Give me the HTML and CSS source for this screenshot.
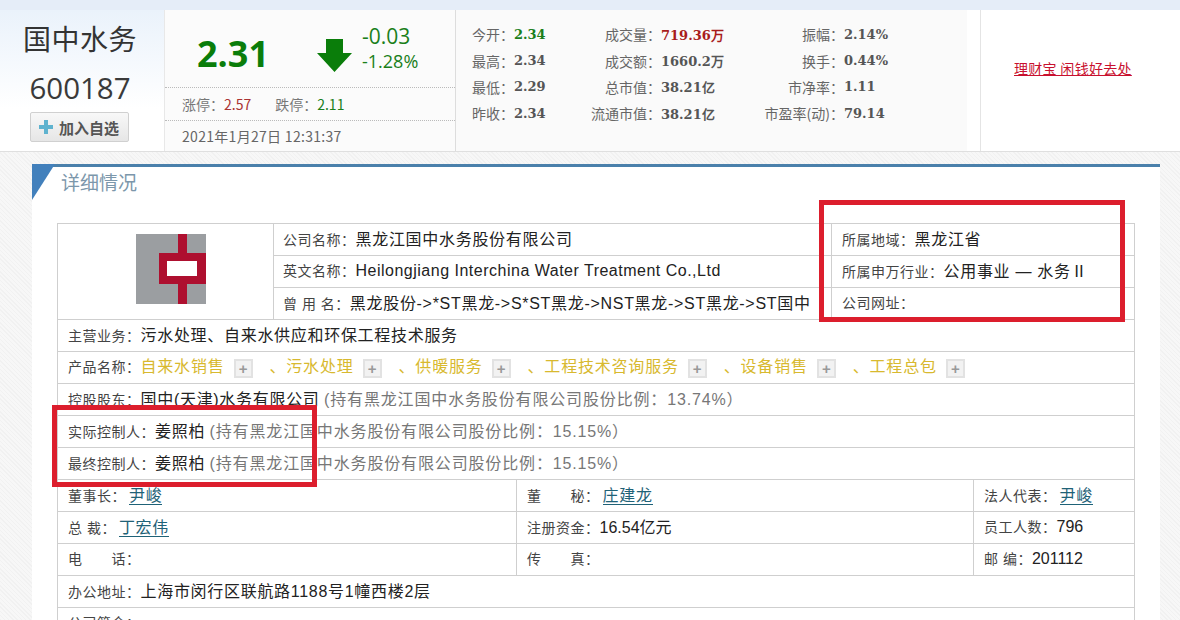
FILE: index.html
```html
<!DOCTYPE html>
<html lang="zh-CN">
<head>
  <meta charset="UTF-8" />
  <title>国中水务 600187</title>
  <link rel="stylesheet" href="styles.css">
</head>
<body>

  <div class="quote">
    <div class="stock">
      <div class="stock-name">国中水务</div>
      <div class="stock-code">600187</div>
      <div class="add-btn">
        <svg class="add-icon" width="16" height="16" viewBox="0 0 16 16"><path d="M6 1h4v5h5v4h-5v5H6v-5H1V6h5z" fill="#5fb3cf"/></svg>
        加入自选
      </div>
    </div>

    <div class="price">
      <div class="price-main">
        <span class="price-now">2.31</span>
        <svg class="price-arrow" width="35" height="33" viewBox="0 0 35 33"><path d="M9 0h17v14h9L17.500 33 0 14h9z" fill="#0a7d0a"/></svg>
        <div class="price-change">
          <div class="change-abs">-0.03</div>
          <div class="change-pct">-1.28%</div>
        </div>
      </div>
      <div class="price-limit">
        <span>涨停：<i class="up">2.57</i></span>
        <span>跌停：<i class="down">2.11</i></span>
      </div>
      <div class="price-time">2021年1月27日 12:31:37</div>
    </div>

    <div class="stats">
      <span class="st-label">今开：</span><b class="st-val down">2.34</b>
      <span class="st-label">成交量：</span><b class="st-val red">719.36万</b>
      <span class="st-label">振幅：</span><b class="st-val">2.14%</b>

      <span class="st-label">最高：</span><b class="st-val">2.34</b>
      <span class="st-label">成交额：</span><b class="st-val">1660.2万</b>
      <span class="st-label">换手：</span><b class="st-val">0.44%</b>

      <span class="st-label">最低：</span><b class="st-val">2.29</b>
      <span class="st-label">总市值：</span><b class="st-val">38.21亿</b>
      <span class="st-label">市净率：</span><b class="st-val">1.11</b>

      <span class="st-label">昨收：</span><b class="st-val">2.34</b>
      <span class="st-label">流通市值：</span><b class="st-val">38.21亿</b>
      <span class="st-label">市盈率(动)：</span><b class="st-val">79.14</b>
    </div>

    <div class="promo"><a href="#">理财宝 闲钱好去处</a></div>
  </div>

  <div class="panel">
    <div class="panel-corner"></div>
    <h2 class="panel-title">详细情况</h2>

    <table class="info info-top">
      <tr>
        <td class="logo-cell" rowspan="3">
          <svg width="70" height="70" viewBox="0 0 70 70">
            <rect width="70" height="70" fill="#9b9ea1"/>
            <rect x="42" width="9" height="70" fill="#ae0f2f"/>
            <rect x="23" y="19" width="47" height="31" fill="#ae0f2f"/>
            <rect x="31" y="27" width="30" height="15" fill="#fff"/>
          </svg>
        </td>
        <td class="col-mid"><span class="lb">公司名称：</span><span class="val">黑龙江国中水务股份有限公司</span></td>
        <td><span class="lb">所属地域：</span><span class="val">黑龙江省</span></td>
      </tr>
      <tr>
        <td class="col-mid"><span class="lb">英文名称：</span><span class="val val-en">Heilongjiang Interchina Water Treatment Co.,Ltd</span></td>
        <td><span class="lb">所属申万行业：</span><span class="val">公用事业 — 水务<span class="roman">Ⅱ</span></span></td>
      </tr>
      <tr>
        <td class="col-mid"><span class="lb">曾 用 名：</span><span class="val">黑龙股份-&gt;*ST黑龙-&gt;S*ST黑龙-&gt;NST黑龙-&gt;ST黑龙-&gt;ST国中</span></td>
        <td><span class="lb">公司网址：</span></td>
      </tr>
    </table>

    <table class="info info-wide">
      <tr><td><span class="lb">主营业务：</span><span class="val">污水处理、自来水供应和环保工程技术服务</span></td></tr>
      <tr>
        <td class="products">
          <span class="lb">产品名称：</span><span class="prod">自来水销售</span><span class="plus">+</span><span class="prod prod-next">、污水处理</span><span class="plus">+</span><span class="prod prod-next">、供暖服务</span><span class="plus">+</span><span class="prod prod-next">、工程技术咨询服务</span><span class="plus">+</span><span class="prod prod-next">、设备销售</span><span class="plus">+</span><span class="prod prod-next">、工程总包</span><span class="plus">+</span>
        </td>
      </tr>
      <tr><td><span class="lb">控股股东：</span><span class="val">国中(天津)水务有限公司</span> <span class="hold">(持有黑龙江国中水务股份有限公司股份比例：13.74%）</span></td></tr>
      <tr><td><span class="lb">实际控制人：</span><span class="val">姜照柏</span> <span class="hold">(持有黑龙江国中水务股份有限公司股份比例：15.15%）</span></td></tr>
      <tr><td><span class="lb">最终控制人：</span><span class="val">姜照柏</span> <span class="hold">(持有黑龙江国中水务股份有限公司股份比例：15.15%）</span></td></tr>
    </table>

    <table class="info info-three">
      <tr>
        <td class="c1"><span class="lb">董事长：</span><a class="person" href="#">尹峻</a></td>
        <td class="c2"><span class="lb">董　　秘：</span><a class="person" href="#">庄建龙</a></td>
        <td><span class="lb">法人代表：</span><a class="person" href="#">尹峻</a></td>
      </tr>
      <tr>
        <td class="c1"><span class="lb">总 裁：</span><a class="person" href="#">丁宏伟</a></td>
        <td class="c2"><span class="lb">注册资金：</span><span class="val num">16.54亿元</span></td>
        <td><span class="lb">员工人数：</span><span class="val num">796</span></td>
      </tr>
      <tr>
        <td class="c1"><span class="lb">电　　话：</span></td>
        <td class="c2"><span class="lb">传　　真：</span></td>
        <td><span class="lb">邮 编：</span><span class="val num">201112</span></td>
      </tr>
    </table>

    <table class="info info-wide info-last">
      <tr><td><span class="lb">办公地址：</span><span class="val">上海市闵行区联航路1188号1幢西楼2层</span></td></tr>
      <tr><td><span class="lb">公司简介：</span></td></tr>
    </table>
  </div>

  <div class="mark mark-right"></div>
  <div class="mark mark-left"></div>

</body>
</html>
```

FILE: styles.css
```css
html, body {
  height: 620px;
  overflow: hidden;
}
body {
  margin: 0;
  font-family: "Noto Sans CJK SC", sans-serif;
  color: #333;
  background-color: #f4f4f4;
  background-image: repeating-linear-gradient(45deg, #f1f1f1 0, #f1f1f1 1px, #f7f7f7 1px, #f7f7f7 3px);
  position: relative;
}

/* top quote strip */
.quote {
  display: flex;
  height: 141px;
  border-top: 10px solid #e5edf8;
  border-bottom: 1px solid #dfdfdf;
  background-color: #fff;
}
.stock {
  box-sizing: border-box;
  width: 164px;
  padding-right: 4px;
  background: linear-gradient(#eaf2fb, #fff 70%);
  text-align: center;
}
.stock-name {
  font-size: 28px;
  line-height: 40px;
  margin-top: 8px;
  letter-spacing: 0.500px;
}
.stock-code {
  font-family: "Open Sans", sans-serif;
  font-size: 29.500px;
  line-height: 40px;
  margin-top: 10px;
  color: #3a3a3a;
}
.add-btn {
  display: flex;
  align-items: center;
  gap: 5px;
  box-sizing: border-box;
  width: 99px;
  height: 30px;
  margin: 4px 0 0 30px;
  padding-left: 7px;
  border: 1px solid #d0d0d0;
  border-radius: 2px;
  background: linear-gradient(#f8f8f8, #e6e6e6);
  font-size: 15px;
  font-weight: bold;
  color: #555;
}
.add-icon {
  flex: none;
}

.price {
  width: 290px;
  border-left: 1px solid #e8e8e8;
  background-color: #fbfbfb;
}
.price-main {
  display: flex;
  align-items: center;
  height: 77px;
  padding-left: 32px;
  border-bottom: 1px dotted #bbb;
}
.price-now {
  font-family: "Open Sans", sans-serif;
  font-size: 36px;
  font-weight: bold;
  color: #0a7d0a;
  width: 120px;
  margin-top: 10px;
}
.price-arrow {
  margin-top: 14px;
}
.price-change {
  margin-left: 10px;
  margin-top: -2px;
  font-family: "Open Sans", sans-serif;
  color: #1a7f1a;
}
.change-abs {
  font-size: 21px;
  line-height: 26px;
}
.change-pct {
  font-size: 18px;
  line-height: 24px;
}
.price-limit {
  display: flex;
  gap: 24px;
  height: 32px;
  align-items: center;
  padding-left: 17px;
  border-bottom: 1px dotted #bbb;
  font-size: 14px;
  color: #777;
}
.price-limit i {
  font-style: normal;
}
.price-time {
  padding-left: 17px;
  line-height: 31px;
  font-size: 14px;
  letter-spacing: 0.300px;
  color: #666;
}
.up {
  color: #a33;
}
.down {
  color: #1a7f1a;
}

.stats {
  width: 512px;
  box-sizing: border-box;
  display: grid;
  grid-template-columns: 58px 60px 87px 100px 83px auto;
  grid-auto-rows: 26.400px;
  align-items: center;
  align-content: start;
  padding: 11px 0 0 0;
  border-left: 1px solid #ddd;
  background-color: #fafafa;
  font-size: 14px;
  color: #666;
}
.st-label {
  text-align: right;
  white-space: nowrap;
}
.st-val {
  font-family: "DejaVu Serif", serif;
  font-size: 13px;
  color: #555;
  white-space: nowrap;
}
.st-val.down {
  color: #1a7f1a;
}
.st-val.red {
  color: #a81c1c;
}

.promo {
  margin-left: 13px;
  flex: 1;
  border-left: 1px solid #e4e4e4;
  padding: 48px 0 0 33px;
  font-size: 14px;
  letter-spacing: 0.300px;
}
.promo a {
  color: #c8102e;
}

/* detail panel */
.panel {
  position: relative;
  box-sizing: border-box;
  width: 1128px;
  height: 460px;
  margin: 12px 0 0 32px;
  padding: 0 25px;
  border-top: 3px solid #4a80ab;
  background-color: #fff;
}
.panel-corner {
  position: absolute;
  left: 0;
  top: -3px;
  width: 23px;
  height: 36px;
  background-color: #4280bc;
  clip-path: polygon(0 0, 100% 0, 0 100%);
}
.panel-title {
  margin: 0;
  height: 56px;
  padding: 2px 0 0 4px;
  box-sizing: border-box;
  font-size: 19px;
  font-weight: normal;
  line-height: 26px;
  color: #7c97ab;
}

.info {
  width: 1078px;
  border-collapse: collapse;
  table-layout: fixed;
}
.info + .info {
  margin-top: -1px;
}
.info td {
  height: 32px;
  padding: 0 0 4px 10px;
  border: 1px solid #cfcfcf;
  box-sizing: border-box;
  white-space: nowrap;
  overflow: hidden;
  font-family: "Liberation Sans", "Noto Sans CJK SC", sans-serif;
}
.info .logo-cell {
  width: 216px;
  padding: 0;
}
.logo-cell svg {
  display: block;
  margin: 0 0 6px 78px;
}
.info .col-mid {
  width: 558px;
  padding-left: 9px;
}
.lb {
  font-size: 14px;
  letter-spacing: 0.500px;
  color: #444;
}
.val {
  font-size: 16px;
  letter-spacing: 0.700px;
  color: #222;
}
.val-en {
  letter-spacing: 0.500px;
}
.roman {
  font-family: "Liberation Serif", serif;
}
.num {
  letter-spacing: 0;
}
.hold {
  font-size: 16px;
  color: #777;
  letter-spacing: 0.850px;
}
.products {
  font-size: 16px;
}
.prod {
  font-size: 16px;
  color: #d8b92f;
  letter-spacing: 0.800px;
}
.prod-next {
  margin-left: 17px;
}
.plus {
  display: inline-block;
  box-sizing: border-box;
  width: 19px;
  height: 19px;
  margin-left: 9px;
  border: 2px solid #e2e2e2;
  background-color: #f2f2f2;
  color: #999;
  font-size: 15px;
  font-weight: bold;
  line-height: 15px;
  text-align: center;
  vertical-align: middle;
}
.c1 {
  width: 459px;
}
.c2 {
  width: 457px;
}
.person {
  margin-left: 3px;
  font-size: 16px;
  letter-spacing: 0.700px;
  color: #1f6277;
  text-decoration: none;
  border-bottom: 1px solid #1f6277;
}

/* red marks drawn over the screenshot */
.mark {
  position: absolute;
  box-sizing: border-box;
  border: 5px solid #dc1e2d;
}
.mark-right {
  left: 819px;
  top: 200px;
  width: 306px;
  height: 122px;
}
.mark-left {
  left: 52px;
  top: 405px;
  width: 265px;
  height: 82px;
}
```
